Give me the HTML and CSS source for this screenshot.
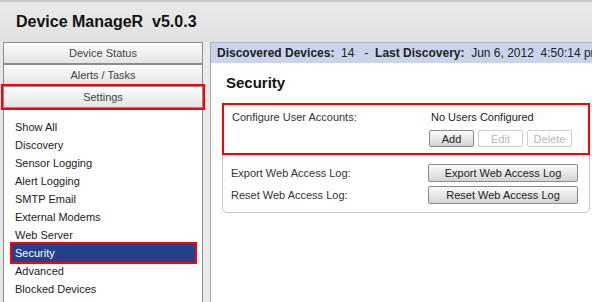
FILE: index.html
```html
<!DOCTYPE html>
<html lang="en">
<head>
    <meta charset="UTF-8">
    <title>Device ManageR</title>
    <link rel="stylesheet" href="styles.css">
</head>
<body>
    <!-- Top bar -->
    <div class="topbar">Device ManageR&nbsp; v5.0.3</div>

    <div class="main">
        <!-- Sidebar -->
        <div class="sidebar">
            <div class="nav-btn">Device Status</div>
            <div class="nav-btn">Alerts / Tasks</div>
            <div class="nav-btn marked">Settings</div>
            <ul class="menu">
                <li>Show All</li>
                <li>Discovery</li>
                <li>Sensor Logging</li>
                <li>Alert Logging</li>
                <li>SMTP Email</li>
                <li>External Modems</li>
                <li>Web Server</li>
                <li class="active">Security</li>
                <li>Advanced</li>
                <li>Blocked Devices</li>
            </ul>
        </div>

        <div class="splitter"></div>

        <!-- Main Content -->
        <div class="content">
            <div class="status-bar">
                <b>Discovered Devices:</b>&nbsp; 14 &nbsp; - &nbsp;<b>Last Discovery:</b>&nbsp; Jun 6, 2012&nbsp; 4:50:14 pm
            </div>
            <div class="panel">
                <h1>Security</h1>
                <div class="fieldset">
                    <div class="row accounts">
                        <div class="label">Configure User Accounts:</div>
                        <div class="value">
                            <div class="note">No Users Configured</div>
                            <div class="btn-group">
                                <button class="btn small">Add</button>
                                <button class="btn small" disabled>Edit</button>
                                <button class="btn small" disabled>Delete</button>
                            </div>
                        </div>
                    </div>
                    <div class="row">
                        <div class="label">Export Web Access Log:</div>
                        <button class="btn wide">Export Web Access Log</button>
                    </div>
                    <div class="row">
                        <div class="label">Reset Web Access Log:</div>
                        <button class="btn wide">Reset Web Access Log</button>
                    </div>
                </div>
            </div>
        </div>
    </div>
</body>
</html>
```

FILE: styles.css
```css
/* Basic Reset */
body, h1, ul, li, button {
    margin: 0;
    padding: 0;
    box-sizing: border-box;
}

* {
    box-sizing: border-box;
}

body {
    font-family: "Liberation Sans", Arial, sans-serif;
    font-size: 11px;
    color: #333;
    background-color: #e6e6e6;
    height: 302px;
    overflow: hidden;
}

/* Top bar */
.topbar {
    height: 42px;
    padding-left: 16px;
    display: flex;
    align-items: center;
    font-size: 16px;
    font-weight: bold;
    color: #111;
    border-top: 2px solid #c9c9c9;
    background: linear-gradient(#e9e9e9, #e1e1e1);
}

.main {
    display: flex;
    height: 260px;
}

/* Sidebar */
.sidebar {
    width: 200px;
    flex-shrink: 0;
    margin-left: 3px;
    display: flex;
    flex-direction: column;
}

.nav-btn {
    height: 22px;
    line-height: 20px;
    text-align: center;
    color: #444;
    font-size: 11px;
    border: 1px solid #8c8c8c;
    background: linear-gradient(#fdfdfd, #e4e4e4);
}

.nav-btn.marked {
    outline: 2px solid #f00;
    outline-offset: 0;
    position: relative;
}

.menu {
    flex: 1;
    list-style: none;
    padding: 10px 7px 0 8px;
    font-size: 11px;
    background-color: #fff;
    border-left: 1px solid #8c8c8c;
    border-right: 1px solid #8c8c8c;
}

.menu li {
    height: 18px;
    line-height: 18px;
    padding-left: 3px;
    color: #222;
}

.menu li.active {
    background-color: #23408c;
    color: #fff;
    outline: 2px solid #f00;
}

.splitter {
    width: 7px;
    flex-shrink: 0;
    background-color: #ececec;
}

/* Content */
.content {
    flex: 1;
    min-width: 0;
    background-color: #fff;
    border-left: 1px solid #a8a8a8;
}

.status-bar {
    height: 21px;
    line-height: 21px;
    padding-left: 6px;
    font-size: 12px;
    color: #222;
    white-space: nowrap;
    overflow: hidden;
    background-color: #c8d4ea;
    border-top: 1px solid #aab4c6;
}

.panel {
    padding: 0 0 0 11px;
}

h1 {
    font-size: 15px;
    height: 40px;
    line-height: 40px;
    padding-left: 4px;
    color: #111;
}

.fieldset {
    width: 368px;
    border: 1px solid #c6c6c6;
    border-radius: 5px;
    padding-bottom: 4px;
}

.row {
    display: flex;
    align-items: center;
    padding-left: 8px;
    margin-bottom: 4px;
    font-size: 11px;
}

.row .label {
    width: 197px;
    color: #333;
}

.row.accounts {
    margin: -1px -1px 9px -1px;
    padding: 5px 0 6px 8px;
    border: 2px solid #f00;
    align-items: flex-start;
}

.accounts .label {
    line-height: 16px;
    margin-top: -1px;
}

.note {
    line-height: 14px;
    padding-left: 2px;
    color: #222;
}

.btn-group {
    display: flex;
    gap: 4px;
    margin-top: 6px;
}

/* Buttons */
.btn {
    font-family: "Liberation Sans", Arial, sans-serif;
    font-size: 11px;
    color: #222;
    border: 1px solid #8a8a8a;
    border-radius: 2px;
    background: linear-gradient(#fbfbfb, #d4d4d4);
}

.btn.small {
    width: 45px;
    height: 17px;
}

.btn.wide {
    width: 150px;
    height: 18px;
}

.btn:disabled {
    background: #fff;
    border-color: #cfcfcf;
    color: #b8b8b8;
}
```
